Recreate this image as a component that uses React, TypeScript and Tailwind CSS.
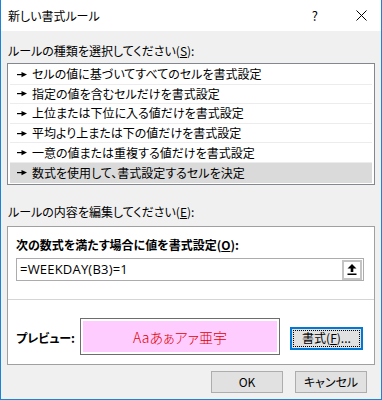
const font = "font-['Noto_Sans_CJK_JP',sans-serif] [font-feature-settings:'palt']";

const rules = [
  "セルの値に基づいてすべてのセルを書式設定",
  "指定の値を含むセルだけを書式設定",
  "上位または下位に入る値だけを書式設定",
  "平均より上または下の値だけを書式設定",
  "一意の値または重複する値だけを書式設定",
  "数式を使用して、書式設定するセルを決定",
];

const Pointer = () => (
  <svg width="10" height="7" viewBox="0 0 10 7" className="shrink-0">
    <rect x="0" y="3" width="5" height="1.2" fill="#000" />
    <polygon points="4.5,1 10,3.6 4.5,6.2" fill="#000" />
  </svg>
);

export default function App() {
  return (
    <div
      className={`${font} w-[382px] h-[400px] flex flex-col bg-[#f0f0f0] border-x border-b border-[#1b84d6] text-[12px] text-black leading-none`}
    >
      {/* title bar */}
      <div className="h-[31px] bg-white flex items-center pl-[7px] shrink-0">
        <span className="text-[12px]">新しい書式ルール</span>
        <span className="ml-auto mr-[38px] text-[13px]">?</span>
        <svg width="11" height="11" viewBox="0 0 11 11" className="mr-[14px]">
          <path d="M0.5 0.5 L10.5 10.5 M10.5 0.5 L0.5 10.5" stroke="#000" strokeWidth="1" />
        </svg>
      </div>

      <div className="flex flex-col px-[6px]">
        <div className="mt-[12px] h-[15px] flex items-center pl-[1px]">
          ルールの種類を選択してください(<span className="underline">S</span>):
        </div>

        {/* rule type list */}
        <div className="mt-[5px] h-[122px] bg-white border border-[#828790] px-[2px] pt-[1px] flex flex-col">
          {rules.map((r, i) => (
            <div
              key={r}
              className={`h-[19.6px] flex items-center gap-[5px] pl-[7px] ${
                i === rules.length - 1 ? "bg-[#dadada]" : "border-b border-[#ececec]"
              }`}
            >
              <Pointer />
              <span>{r}</span>
            </div>
          ))}
        </div>

        <div className="mt-[19px] h-[15px] flex items-center pl-[1px]">
          ルールの内容を編集してください(<span className="underline">E</span>):
        </div>

        {/* rule description panel */}
        <div className="mt-[7px] h-[139px] bg-white border border-[#a0a0a0] flex flex-col">
          <div className="pl-[8px] pr-[10px] flex flex-col">
            <div className="mt-[11px] h-[14px] flex items-center font-bold">
              次の数式を満たす場合に値を書式設定(<span className="underline">O</span>):
            </div>
            <div className="mt-[6px] h-[23px] border border-[#acacac] flex items-center">
              <span className="pl-[3px] text-[13px] font-['Open_Sans','Noto_Sans_CJK_JP',sans-serif] tracking-[0.2px]">
                =WEEKDAY(B3)=1
              </span>
              <div className="ml-auto mr-[1px] w-[20px] h-[20px] border-2 border-[#c4c4c4] bg-white flex items-center justify-center">
                <svg width="10" height="11" viewBox="0 0 10 11">
                  <polygon points="5,0 9.5,4.5 6.3,4.5 6.3,8 3.7,8 3.7,4.5 0.5,4.5" fill="#000" />
                  <rect x="0.5" y="9.5" width="9" height="1.5" fill="#000" />
                </svg>
              </div>
            </div>
          </div>

          <div className="mt-[18px] h-px bg-[#d5d5d5]" />

          <div className="pl-[8px] pr-[10px] mt-[21px] flex items-center">
            <span className="font-bold w-[64px]">プレビュー:</span>
            <div className="w-[200px] h-[37px] border border-[#6d6d6d] bg-white p-[2px] -mt-[3px]">
              <div className="w-full h-full bg-[#ffccff] flex items-center justify-center text-[#e00000] text-[14px] font-light">
                Aaあぁアァ亜宇
              </div>
            </div>
            <div className="ml-[10px] w-[73px] h-[23px] border-2 border-[#0078d7] bg-[#e1e1e1] p-[1px]">
              <div className="w-full h-full border border-dotted border-black flex items-center justify-center">
                書式(<span className="underline">F</span>)...
              </div>
            </div>
          </div>
        </div>

        {/* buttons */}
        <div className="mt-[6px] flex justify-end gap-[12px] pr-[8px]">
          <div className="w-[72px] h-[22px] bg-[#e1e1e1] border border-[#adadad] flex items-center justify-center">
            OK
          </div>
          <div className="w-[72px] h-[22px] bg-[#e1e1e1] border border-[#adadad] flex items-center justify-center">
            キャンセル
          </div>
        </div>
      </div>
    </div>
  );
}
